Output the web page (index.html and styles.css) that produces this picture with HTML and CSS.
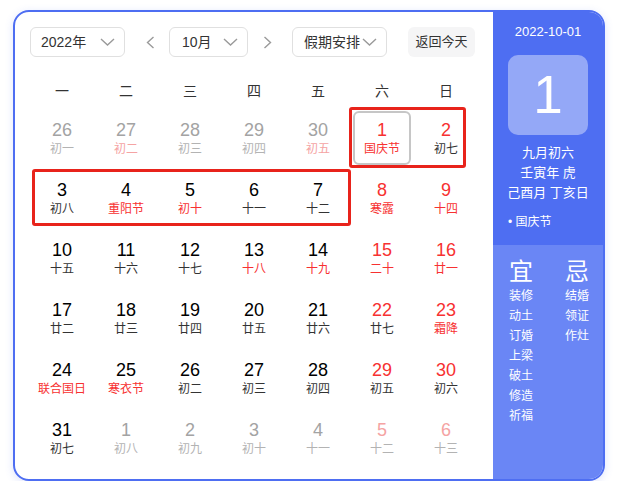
FILE: index.html
```html
<!DOCTYPE html>
<html lang="zh">
<head>
<meta charset="utf-8">
<title>日历</title>
<link rel="stylesheet" href="styles.css">
</head>
<body>
<div class="cal">
  <div class="main">
    <div class="toolbar">
      <div class="select sel-year"><span>2022年</span><svg class="chev" width="15" height="8" viewBox="0 0 15 8"><polyline points="1,1 7.5,7 14,1"/></svg></div>
      <div class="arrow arrow-prev"><svg width="9" height="13" viewBox="0 0 9 13"><polyline points="7.5,1 1.5,6.5 7.5,12"/></svg></div>
      <div class="select sel-month"><span>10月</span><svg class="chev" width="15" height="8" viewBox="0 0 15 8"><polyline points="1,1 7.5,7 14,1"/></svg></div>
      <div class="arrow arrow-next"><svg width="9" height="13" viewBox="0 0 9 13"><polyline points="1.5,1 7.5,6.5 1.5,12"/></svg></div>
      <div class="select sel-holiday"><span>假期安排</span><svg class="chev" width="15" height="8" viewBox="0 0 15 8"><polyline points="1,1 7.5,7 14,1"/></svg></div>
      <div class="today">返回今天</div>
    </div>
    <div class="weekdays">
      <span>一</span><span>二</span><span>三</span><span>四</span><span>五</span><span>六</span><span>日</span>
    </div>
    <div class="days">
      <div class="d off"><span class="n">26</span><span class="l">初一</span></div>
      <div class="d off"><span class="n">27</span><span class="l pink">初二</span></div>
      <div class="d off"><span class="n">28</span><span class="l">初三</span></div>
      <div class="d off"><span class="n">29</span><span class="l">初四</span></div>
      <div class="d off"><span class="n">30</span><span class="l pink">初五</span></div>
      <div class="d sel"><span class="n red">1</span><span class="l red">国庆节</span></div>
      <div class="d"><span class="n red">2</span><span class="l">初七</span></div>

      <div class="d"><span class="n">3</span><span class="l">初八</span></div>
      <div class="d"><span class="n">4</span><span class="l red">重阳节</span></div>
      <div class="d"><span class="n">5</span><span class="l red">初十</span></div>
      <div class="d"><span class="n">6</span><span class="l">十一</span></div>
      <div class="d"><span class="n">7</span><span class="l">十二</span></div>
      <div class="d"><span class="n red">8</span><span class="l red">寒露</span></div>
      <div class="d"><span class="n red">9</span><span class="l red">十四</span></div>

      <div class="d"><span class="n">10</span><span class="l">十五</span></div>
      <div class="d"><span class="n">11</span><span class="l">十六</span></div>
      <div class="d"><span class="n">12</span><span class="l">十七</span></div>
      <div class="d"><span class="n">13</span><span class="l red">十八</span></div>
      <div class="d"><span class="n">14</span><span class="l red">十九</span></div>
      <div class="d"><span class="n red">15</span><span class="l red">二十</span></div>
      <div class="d"><span class="n red">16</span><span class="l red">廿一</span></div>

      <div class="d"><span class="n">17</span><span class="l">廿二</span></div>
      <div class="d"><span class="n">18</span><span class="l">廿三</span></div>
      <div class="d"><span class="n">19</span><span class="l">廿四</span></div>
      <div class="d"><span class="n">20</span><span class="l">廿五</span></div>
      <div class="d"><span class="n">21</span><span class="l">廿六</span></div>
      <div class="d"><span class="n red">22</span><span class="l">廿七</span></div>
      <div class="d"><span class="n red">23</span><span class="l red">霜降</span></div>

      <div class="d"><span class="n">24</span><span class="l red">联合国日</span></div>
      <div class="d"><span class="n">25</span><span class="l red">寒衣节</span></div>
      <div class="d"><span class="n">26</span><span class="l">初二</span></div>
      <div class="d"><span class="n">27</span><span class="l">初三</span></div>
      <div class="d"><span class="n">28</span><span class="l">初四</span></div>
      <div class="d"><span class="n red">29</span><span class="l">初五</span></div>
      <div class="d"><span class="n red">30</span><span class="l">初六</span></div>

      <div class="d"><span class="n">31</span><span class="l">初七</span></div>
      <div class="d off"><span class="n">1</span><span class="l">初八</span></div>
      <div class="d off"><span class="n">2</span><span class="l">初九</span></div>
      <div class="d off"><span class="n">3</span><span class="l">初十</span></div>
      <div class="d off"><span class="n">4</span><span class="l">十一</span></div>
      <div class="d off"><span class="n pink">5</span><span class="l">十二</span></div>
      <div class="d off"><span class="n pink">6</span><span class="l">十三</span></div>
    </div>
  </div>
  <div class="side">
    <div class="side-top">
      <div class="date">2022-10-01</div>
      <div class="bigday">1</div>
      <div class="lunar">
        <div>九月初六</div>
        <div>壬寅年 虎</div>
        <div>己酉月 丁亥日</div>
      </div>
      <div class="fest">• 国庆节</div>
    </div>
    <div class="side-bottom">
      <div class="col">
        <div class="head">宜</div>
        <div>装修</div><div>动土</div><div>订婚</div><div>上梁</div><div>破土</div><div>修造</div><div>祈福</div>
      </div>
      <div class="col">
        <div class="head">忌</div>
        <div>结婚</div><div>领证</div><div>作灶</div>
      </div>
    </div>
  </div>
</div>
<div class="mark mark-a"></div>
<div class="mark mark-b"></div>
</body>
</html>
```

FILE: styles.css
```css
* { box-sizing: border-box; }
html, body { margin: 0; padding: 0; background: #fff; }
body {
  font-family: "Liberation Sans", "Noto Sans CJK SC", sans-serif;
  color: #333;
}
.cal {
  margin: 10px 0 0 13px;
  width: 592px;
  height: 471px;
  border: 2px solid #4e6ef2;
  border-radius: 16px;
  overflow: hidden;
  display: flex;
  box-shadow: 0 2px 8px rgba(78, 110, 242, 0.18);
}
.main {
  width: 478px;
  padding: 15px 15px 0 15px;
}
.toolbar {
  display: flex;
  align-items: center;
  height: 30px;
}
.select {
  height: 30px;
  border: 1px solid #e0e0e0;
  border-radius: 6px;
  display: flex;
  align-items: center;
  justify-content: space-between;
  padding: 0 9px 0 10px;
  font-size: 14px;
  line-height: 20px;
  color: #333;
}
.sel-year { width: 95px; }
.sel-month { width: 79px; padding-left: 12px; }
.sel-holiday { width: 95px; padding-left: 11px; }
.chev polyline, .arrow polyline {
  fill: none;
  stroke: #9a9a9a;
  stroke-width: 1.4;
}
.arrow {
  width: 20px;
  display: flex;
  justify-content: center;
}
.arrow-prev { margin: 0 9px 0 15px; }
.arrow-next { margin: 0 15px 0 9px; }
.today {
  margin-left: 21px;
  height: 30px;
  width: 67px;
  background: #f5f5f6;
  border-radius: 6px;
  font-size: 13px;
  line-height: 30px;
  text-align: center;
  color: #333;
}
.weekdays {
  margin-top: 15px;
  height: 36px;
  display: grid;
  grid-template-columns: repeat(7, 64px);
  align-items: center;
  font-size: 14px;
  color: #333;
}
.weekdays span { text-align: center; }
.days {
  display: grid;
  grid-template-columns: repeat(7, 64px);
  grid-auto-rows: 60px;
}
.d {
  margin: 3px;
  border: 2px solid transparent;
  border-radius: 6px;
  display: flex;
  flex-direction: column;
  align-items: center;
  justify-content: center;
}
.d.sel { border-color: #c6c6c6; }
.n {
  font-size: 18px;
  line-height: 22px;
  color: #000;
}
.l {
  font-size: 12px;
  line-height: 16px;
  color: #333;
  white-space: nowrap;
}
.red { color: #f73131; }
.d.off .n { color: #a3a3a3; }
.d.off .l { color: #b3b3b3; }
.d.off .pink, .d .pink { color: #f5a3a3; }
.side {
  width: 110px;
  color: #fff;
  display: flex;
  flex-direction: column;
}
.side-top {
  background: #4e6ef2;
  height: 233px;
  padding-top: 10px;
  display: flex;
  flex-direction: column;
  align-items: center;
}
.date {
  font-size: 13px;
  line-height: 20px;
}
.bigday {
  margin-top: 13px;
  width: 80px;
  height: 80px;
  border-radius: 10px;
  background: rgba(255, 255, 255, 0.4);
  font-size: 53px;
  line-height: 80px;
  text-align: center;
}
.lunar {
  margin-top: 8px;
  font-size: 13px;
  line-height: 20px;
  text-align: center;
}
.fest {
  align-self: flex-start;
  margin: 10px 0 0 15px;
  font-size: 12px;
  line-height: 18px;
}
.side-bottom {
  flex: 1;
  background: #6a86f5;
  padding: 13px 0 0 16px;
  display: grid;
  grid-template-columns: 56px 40px;
  align-content: start;
  font-size: 12px;
  line-height: 20px;
}
.col .head {
  font-size: 24px;
  line-height: 28px;
}
.mark {
  position: absolute;
  border: 3px solid #e8231b;
  border-radius: 3px;
}
.mark-a { left: 349px; top: 107px; width: 117px; height: 61px; }
.mark-b { left: 32px; top: 169px; width: 319px; height: 57px; }
```
